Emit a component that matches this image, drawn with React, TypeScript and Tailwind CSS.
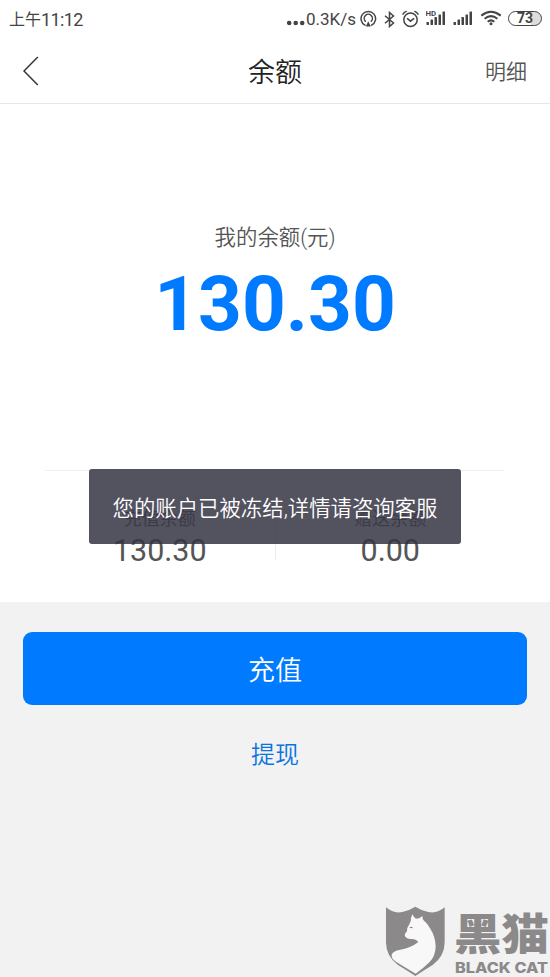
import React from "react";

const signalBars = [3, 5.5, 8, 10.5, 13.5];

function SignalIcon({ hd = false }: { hd?: boolean }) {
  return (
    <svg width="20" height="16" viewBox="0 0 20 16" fill="#444">
      {signalBars.map((h, i) => (
        <rect key={h} x={0.5 + i * 4} y={15 - h} width="2.5" height={h} rx="0.4" />
      ))}
      {hd && (
        <text x="-0.5" y="6" fontSize="7.5" fontWeight="700" textLength="10.500" lengthAdjust="spacingAndGlyphs">
          HD
        </text>
      )}
    </svg>
  );
}

function HotspotIcon() {
  return (
    <svg width="17" height="18" viewBox="0 0 17 18" fill="none" stroke="#444" strokeWidth="1.5" strokeLinecap="round">
      <path d="M5 15.2A7.3 7.3 0 1 1 11.600 15.200" />
      <path d="M5.300 11.200A4.100 4.100 0 1 1 11.300 11.200" />
      <path d="M8.300 11.300L5.800 16.500H10.800Z" fill="#444" stroke="none" />
    </svg>
  );
}

function BluetoothIcon() {
  return (
    <svg width="11" height="17" viewBox="0 0 11 17" fill="none" stroke="#444" strokeWidth="1.5">
      <path d="M1 4.700L9.500 12L5.500 15.500V1.500L9.500 5L1 12.300" />
    </svg>
  );
}

function AlarmIcon() {
  return (
    <svg width="17" height="18" viewBox="0 0 17 18" fill="none" stroke="#444" strokeWidth="1.5" strokeLinecap="round">
      <circle cx="8.500" cy="9.700" r="6.700" />
      <path d="M1 4.200Q2 2.200 4.200 1.400M16 4.200Q15 2.200 12.800 1.400M5.500 8.700L8.500 11.200L11.700 8.700" />
    </svg>
  );
}

function WifiIcon() {
  return (
    <svg width="22" height="16" viewBox="0 0 22 16" fill="none" stroke="#444" strokeWidth="2">
      <path d="M1.300 5.600Q11 -2.200 20.700 5.600" />
      <path d="M4.600 8.700Q11 3.600 17.400 8.700" />
      <path d="M7.700 11.700Q11 9 14.300 11.700" />
      <circle cx="11" cy="13.700" r="1.500" fill="#444" stroke="none" />
    </svg>
  );
}

function StatusBar() {
  return (
    <div className="flex h-[38px] items-center pl-[9px] pr-2 text-[#444]">
      <span className="pt-0.5 text-base leading-6">上午</span>
      <span className="pt-px text-[18px] leading-6 tracking-[-0.6px]">11:12</span>
      <div className="ml-auto flex items-center">
        <svg width="18" height="6" viewBox="0 0 18 6" fill="#444" className="mt-2">
          <circle cx="2.200" cy="3" r="2.300" />
          <circle cx="8.700" cy="3" r="2.300" />
          <circle cx="15.200" cy="3" r="2.300" />
        </svg>
        <span className="w-[55px] pl-px text-[17px] leading-6">0.3K/s</span>
        <HotspotIcon />
        <div className="ml-[7px]">
          <BluetoothIcon />
        </div>
        <div className="ml-[7px]">
          <AlarmIcon />
        </div>
        <div className="ml-[7px] pb-0.5">
          <SignalIcon hd />
        </div>
        <div className="ml-[7px] pb-0.5">
          <SignalIcon />
        </div>
        <div className="ml-[7px] pb-0.5">
          <WifiIcon />
        </div>
        <div className="mb-0.5 ml-[6px] flex h-[15px] w-[34px] items-center justify-center rounded-full border-[1.5px] border-[#444] bg-linear-to-r from-white from-70% to-[#ddd] to-70% text-[14px] font-bold leading-none">
          73
        </div>
      </div>
    </div>
  );
}

function Header() {
  return (
    <header className="grid h-[66px] grid-cols-3 items-center border-b border-[#e6e6e6] px-[23px]">
      <svg width="16" height="30" viewBox="0 0 16 30" fill="none" stroke="#333" strokeWidth="1.5">
        <path d="M14.800 1L1 15L14.800 29" />
      </svg>
      <h1 className="pt-1 text-center text-[27px] font-[350] leading-9 text-[#222]">余额</h1>
      <span className="pt-[3px] text-right text-[21px] font-[350] leading-8 text-[#555]">明细</span>
    </header>
  );
}

function BlackCatLogo() {
  return (
    <svg width="168" height="74" viewBox="0 0 168 74" fill="#8b898a">
      <g transform="scale(0.3333)">
        <path d="M12 13Q36 34 64 26Q86 20 100 11Q114 20 136 26Q164 34 188 13V118Q188 160 152 186Q124 203 100 219Q76 203 48 186Q12 160 12 118Z" />
        <path
          fill="#f8f8f8"
          d="M91 34Q96 44 102 47Q107 45 112 46Q117 41 121 39Q121 46 124 51Q136 61 145 77Q160 101 161 128Q162 157 142 178Q122 198 101 212Q64 190 43 177Q27 166 29 155Q32 144 55 140Q88 134 109 117Q101 107 87 108Q71 108 68 97Q68 91 75 85Q75 73 82 64Q88 55 87 45Z"
        />
        <path d="M82 73Q87 69 93 73Q88 78 82 73Z" />
      </g>
      <text x="72" y="46.500" fontSize="43" fontWeight="900" textLength="95" lengthAdjust="spacingAndGlyphs">
        黑猫
      </text>
      <text x="73" y="70" fontSize="14.500" fontWeight="800" textLength="93" lengthAdjust="spacingAndGlyphs" className="font-['Inter']">
        BLACK CAT
      </text>
    </svg>
  );
}

const balances = [
  { label: "充值余额", amount: "130.30" },
  { label: "赠送余额", amount: "0.00" },
];

export default function App() {
  return (
    <div className="relative flex h-[977px] w-[550px] flex-col overflow-hidden bg-[#f2f2f2] font-['Roboto','Noto_Sans_CJK_SC',sans-serif]">
      <div className="flex h-[602px] flex-col bg-white">
        <StatusBar />
        <Header />

        {/* Total balance */}
        <div className="flex h-[366px] flex-col items-center pt-[118px]">
          <p className="text-[21.4px] font-[350] leading-8 text-[#555]">我的余额(元)</p>
          <p className="mt-[5px] text-[76.5px] font-bold leading-[90px] text-[#007aff]">130.30</p>
        </div>

        {/* Balance breakdown */}
        <div className="mx-[45px] flex border-t border-[#f1f1f1] pt-[34px]">
          {balances.map((b, i) => (
            <div
              key={b.label}
              className={`flex h-[55px] flex-1 flex-col items-center ${i === 0 ? "border-r border-[#ececec]" : ""}`}
            >
              <p className="text-[18px] leading-7 text-[#666]">{b.label}</p>
              <p className="text-[30.5px] leading-9 text-[#555]">{b.amount}</p>
            </div>
          ))}
        </div>
      </div>

      {/* Actions */}
      <div className="flex flex-col items-center px-[23px] pt-[30px]">
        <button className="h-[73px] w-full rounded-[9px] bg-[#007aff] pt-1.5 text-[27px] font-[350] text-white">充值</button>
        <button className="mt-[32px] text-[24px] font-[350] leading-9 text-[#0a74e0]">提现</button>
      </div>

      {/* Toast */}
      <div className="absolute left-[89px] top-[469px] flex h-[75px] w-[372px] items-center justify-center rounded-[3px] bg-[#353443]/85 pt-1.5 text-[21.4px] font-[350] text-white">
        您的账户已被冻结,详情请咨询客服
      </div>

      <div className="absolute bottom-0 right-0">
        <BlackCatLogo />
      </div>
    </div>
  );
}
